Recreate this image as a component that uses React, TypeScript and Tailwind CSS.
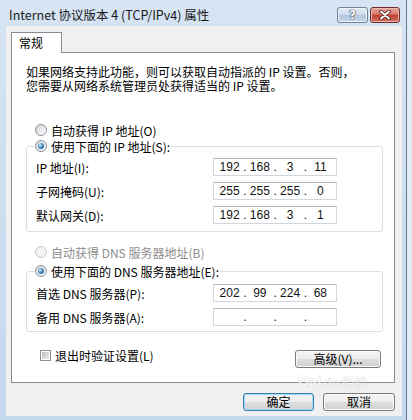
import React from "react";

const CJK = "font-['Noto_Sans_CJK_SC',sans-serif]";

function Radio({ checked, disabled }: { checked?: boolean; disabled?: boolean }) {
  return (
    <span
      className={`inline-flex w-[12px] h-[12px] shrink-0 rounded-full border items-center justify-center ${
        disabled
          ? "border-[#c6c6c6] bg-[#f3f3f3]"
          : "border-[#8b9097] bg-[linear-gradient(135deg,#d3d7dc,#fbfbfb)]"
      }`}
    >
      {checked && (
        <span className="w-[6px] h-[6px] rounded-full bg-[radial-gradient(circle_at_35%_35%,#c4e8fb,#3b80b9_55%,#0f3d68)]" />
      )}
    </span>
  );
}

function IpBox({ parts }: { parts: string[] }) {
  return (
    <div className="w-[124px] h-[18px] border border-[#d2d6dc] border-t-[#b5b8be] bg-white flex items-center px-[2px] font-['Liberation_Sans',sans-serif] text-[12px] leading-none text-[#111]">
      {parts.map((p, i) => (
        <React.Fragment key={i}>
          {i > 0 && <span className="w-[3px] text-center">.</span>}
          <span className="flex-1 text-center">{p}</span>
        </React.Fragment>
      ))}
    </div>
  );
}

function Btn({ children, def, className = "" }: { children: React.ReactNode; def?: boolean; className?: string }) {
  return (
    <div
      className={`h-[18px] rounded-[3px] border flex items-center justify-center text-[12px] leading-none text-black bg-[linear-gradient(to_bottom,#f4f4f4_0%,#ececec_50%,#dedede_50%,#d2d2d2_100%)] ${
        def
          ? "border-[#3c7fb1] shadow-[inset_0_0_0_1px_#9fd8f5]"
          : "border-[#7a7a7a] shadow-[inset_0_0_0_1px_#fbfbfb]"
      } ${className}`}
    >
      {children}
    </div>
  );
}

function Row({ label, parts }: { label: string; parts: string[] }) {
  return (
    <div className="flex items-center h-[18px] pl-[2px]">
      <span className="w-[177px]">{label}</span>
      <IpBox parts={parts} />
    </div>
  );
}

export default function App() {
  return (
    <div className={`relative w-[412px] h-[420px] flex bg-[#e3ecf6] ${CJK} text-[12px] leading-[13px] text-black overflow-hidden`}>
      <div className="w-[407px] h-full flex flex-col border-r border-[#6b7c90] bg-[linear-gradient(to_bottom,#d6e4f3,#c4d8ee)] pb-[4px]">
        {/* title bar */}
        <div className="h-[26px] shrink-0 flex items-start justify-between pl-[9px] pr-[6px] pt-[7px]">
          <span className="text-[12.5px] leading-[16px] text-[#1a1a1a]">Internet 协议版本 4 (TCP/IPv4) 属性</span>
          <div className="flex gap-[2px]">
            <div className="w-[31px] h-[16px] rounded-[3px] border border-[#6f829b] bg-[linear-gradient(to_bottom,#e4ecf5_0%,#cfdcea_45%,#b3c6dc_50%,#c6d7e9_100%)] flex items-center justify-center shadow-[inset_0_0_0_1px_#eef4fa]">
              <span className="font-['DejaVu_Sans',sans-serif] font-bold text-[12px] leading-none text-white [text-shadow:0_0_1px_#203040,0_0_1px_#203040,0_0_1px_#203040]">?</span>
            </div>
            <div className="w-[30px] h-[16px] rounded-[3px] border border-[#6e2a25] bg-[linear-gradient(to_bottom,#e8a89c_0%,#d6776a_45%,#c0402f_50%,#d2705f_100%)] flex items-center justify-center shadow-[inset_0_0_0_1px_#eeb7ad]">
              <svg width="12" height="10" viewBox="0 0 12 10">
                <path d="M2 1.5 L10 8.5 M10 1.5 L2 8.5" stroke="#4a1a15" strokeWidth="3.6" strokeLinecap="round" />
                <path d="M2 1.5 L10 8.5 M10 1.5 L2 8.5" stroke="#ffffff" strokeWidth="2" strokeLinecap="round" />
              </svg>
            </div>
          </div>
        </div>

        {/* client */}
        <div className="flex-1 flex flex-col ml-[6px] mr-[4px] bg-[#f0f0f0] pt-[6px] pb-[5px] pl-[5px] pr-[7px]">
          {/* tab */}
          <div className="flex">
            <div className="relative z-10 -mb-px w-[51px] h-[21px] border border-b-0 border-[#898c95] bg-white pl-[7px] pt-[3px] text-[12px] leading-[14px]">
              常规
            </div>
          </div>
          {/* panel */}
          <div className="flex-1 flex flex-col border border-[#898c95] bg-white pl-[14px] pr-[11px]">
            <div className="mt-[12px] flex flex-col">
              <div className="h-[14px] leading-[14px]">如果网络支持此功能，则可以获取自动指派的 IP 设置。否则，</div>
              <div className="h-[14px] leading-[14px]">您需要从网络系统管理员处获得适当的 IP 设置。</div>
            </div>

            <div className="mt-[29px] h-[16px] flex items-center gap-[4px] ml-[9px]">
              <Radio />
              <span>自动获得 IP 地址(O)</span>
            </div>

            <fieldset className="border border-[#d5dfe5] rounded-[3px] pl-[7px] pb-[7px] flex flex-col">
              <legend className="px-[1px] h-[16px]">
                <span className="flex items-center gap-[4px] h-[16px]">
                  <Radio checked />
                  <span>使用下面的 IP 地址(S):</span>
                </span>
              </legend>
              <div className="mt-[4px] flex flex-col gap-[6px]">
                <Row label="IP 地址(I):" parts={["192", "168", "3", "11"]} />
                <Row label="子网掩码(U):" parts={["255", "255", "255", "0"]} />
                <Row label="默认网关(D):" parts={["192", "168", "3", "1"]} />
              </div>
            </fieldset>

            <div className="mt-[12px] h-[16px] flex items-center gap-[4px] ml-[9px] text-[#8d8d8d]">
              <Radio disabled />
              <span>自动获得 DNS 服务器地址(B)</span>
            </div>

            <fieldset className="mt-[3px] border border-[#d5dfe5] rounded-[3px] pl-[7px] pb-[5px] flex flex-col">
              <legend className="px-[1px] h-[16px]">
                <span className="flex items-center gap-[4px] h-[16px]">
                  <Radio checked />
                  <span>使用下面的 DNS 服务器地址(E):</span>
                </span>
              </legend>
              <div className="mt-[5px] flex flex-col gap-[6px]">
                <Row label="首选 DNS 服务器(P):" parts={["202", "99", "224", "68"]} />
                <Row label="备用 DNS 服务器(A):" parts={["", "", "", ""]} />
              </div>
            </fieldset>

            <div className="mt-[18px] flex items-start justify-between pl-[14px] pr-[2px]">
              <div className="flex items-center gap-[4px] h-[11px]">
                <span className="w-[11px] h-[11px] border border-[#8e8f8f] bg-white p-[1px] flex">
                  <span className="flex-1 bg-[linear-gradient(135deg,#b9bdc2,#eeeeee)]" />
                </span>
                <span className="leading-[13px]">退出时验证设置(L)</span>
              </div>
              <Btn className="w-[86px] h-[17px]">高级(V)...</Btn>
            </div>
          </div>

          {/* bottom buttons */}
          <div className="mt-[10px] flex justify-end gap-[9px]">
            <Btn def className="w-[71px]">确定</Btn>
            <Btn className="w-[72px]">取消</Btn>
          </div>
        </div>
      </div>
      <div className="flex-1" />

      {/* watermark */}
      <div className="absolute left-[298px] top-[373px] flex items-end gap-[2px] opacity-70 pointer-events-none">
        <span className="font-['Liberation_Sans',sans-serif] font-bold text-[15px] leading-none text-white [text-shadow:0_0_1px_#b8b8b8,0_0_1px_#b8b8b8]">Bai</span>
        <span className="text-[13px] leading-none text-white [text-shadow:0_0_1px_#b8b8b8,0_0_1px_#b8b8b8]">du</span>
        <span className="text-[13px] leading-none text-white [text-shadow:0_0_1px_#b8b8b8,0_0_1px_#b8b8b8]">经验</span>
      </div>
    </div>
  );
}
